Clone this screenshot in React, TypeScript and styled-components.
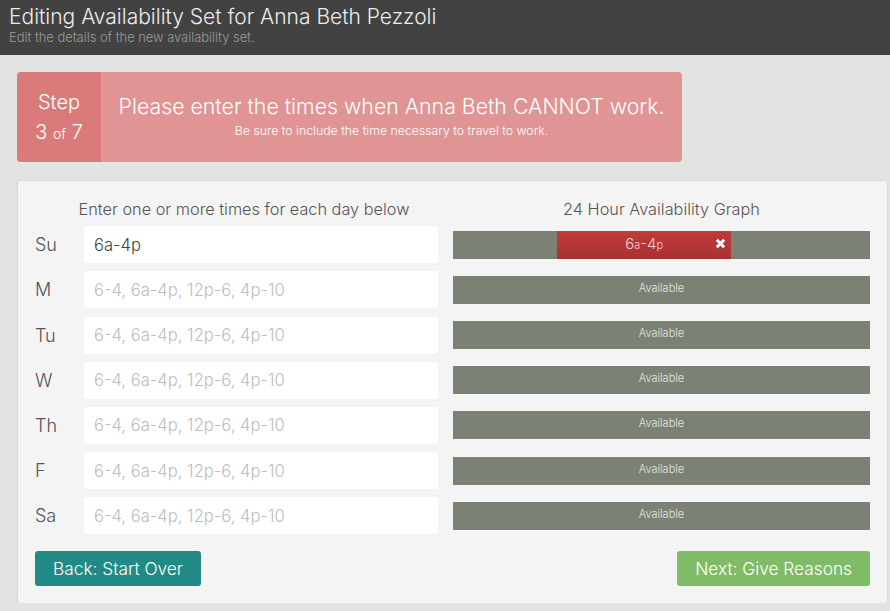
import React from "react";
import styled, { createGlobalStyle } from "styled-components";

const Global = createGlobalStyle`
  html, body { margin: 0; padding: 0; background: #e3e3e3; }
  body { font-family: Inter, "Liberation Sans", sans-serif; font-weight: 300; }
  * { box-sizing: border-box; }
`;

const Header = styled.header`
  background: #424242;
  height: 55px;
  padding: 4px 9px 0;
`;
const Title = styled.h1`
  margin: 0;
  font-size: 21px;
  font-weight: 300;
  color: #ececec;
  line-height: 26px;
`;
const Subtitle = styled.div`
  font-size: 12.9px;
  color: #9b9b9b;
  line-height: 16px;
`;

const Main = styled.main`
  padding: 17px 0 0 17px;
`;

const Banner = styled.div`
  display: flex;
  width: 665px;
  height: 90px;
  border-radius: 4px;
  overflow: hidden;
  background: #e09494;
  color: #fff;
`;
const StepBox = styled.div`
  width: 84px;
  background: #d97b7b;
  display: flex;
  flex-direction: column;
  align-items: center;
  justify-content: center;
  font-size: 20px;
  line-height: 30px;
  padding-top: 2px;
`;
const Of = styled.span`
  font-size: 14px;
`;
const BannerText = styled.div`
  flex: 1;
  display: flex;
  flex-direction: column;
  align-items: center;
  justify-content: center;
  padding-bottom: 4px;
`;
const BannerMain = styled.div`
  font-size: 21.3px;
  line-height: 28px;
`;
const BannerSub = styled.div`
  font-size: 12.3px;
  line-height: 16px;
  margin-top: 3px;
`;

const Panel = styled.section`
  margin-top: 19px;
  margin-left: 1px;
  width: 869px;
  background: #f4f4f4;
  border-radius: 3px;
  box-shadow: 0 0 2px rgba(0,0,0,0.15);
  padding: 17px;
`;
const Grid = styled.div`
  display: grid;
  grid-template-columns: 34px 354px 417px;
  column-gap: 15px;
  row-gap: 8.2px;
  align-items: center;
`;
const ColHead = styled.div<{ $wide?: boolean }>`
  grid-column: ${(p) => (p.$wide ? "1 / 3" : "auto")};
  margin-right: ${(p) => (p.$wide ? "-15px" : "0")};
  font-size: 16.3px;
  color: #555;
  text-align: center;
  line-height: 22px;
  margin-bottom: -2px;
`;
const Day = styled.div`
  font-size: 18px;
  color: #555;
`;
const Input = styled.input`
  height: 37px;
  border: none;
  border-radius: 3px;
  background: #fff;
  padding: 0 10px;
  font-family: inherit;
  font-weight: 300;
  font-size: 16.6px;
  color: #444;
  outline: none;
  &::placeholder { color: #bdbdbd; }
`;
const Bar = styled.div`
  position: relative;
  height: 28px;
  background: #7b8275;
  color: #e4e6e2;
  font-size: 11px;
  text-align: center;
  line-height: 24px;
`;
const Block = styled.div`
  position: absolute;
  top: 0;
  bottom: 0;
  background: linear-gradient(#c23a3a, #a83232);
  color: #f0d0d0;
  font-size: 15px;
  line-height: 26px;
  text-align: center;
`;
const Small = styled.span`
  font-size: 11px;
`;
const Close = styled.span`
  position: absolute;
  right: 5px;
  top: 7px;
  display: flex;
  width: 11px;
  height: 11px;
`;

const Footer = styled.div`
  display: flex;
  justify-content: space-between;
  margin-top: 17px;
`;
const Button = styled.button<{ $bg: string }>`
  height: 35px;
  border: none;
  border-radius: 3px;
  background: ${(p) => p.$bg};
  color: #fff;
  font-family: inherit;
  font-weight: 300;
  font-size: 17.3px;
  padding: 0 18px;
`;

const days = ["Su", "M", "Tu", "W", "Th", "F", "Sa"];

export default function App() {
  return (
    <>
      <Global />
      <Header>
        <Title>Editing Availability Set for Anna Beth Pezzoli</Title>
        <Subtitle>Edit the details of the new availability set.</Subtitle>
      </Header>
      <Main>
        <Banner>
          <StepBox>
            <div>Step</div>
            <div>
              3 <Of>of</Of> 7
            </div>
          </StepBox>
          <BannerText>
            <BannerMain>Please enter the times when Anna Beth CANNOT work.</BannerMain>
            <BannerSub>Be sure to include the time necessary to travel to work.</BannerSub>
          </BannerText>
        </Banner>
        <Panel>
          <Grid>
            <ColHead $wide>Enter one or more times for each day below</ColHead>
            <ColHead>24 Hour Availability Graph</ColHead>
            {days.map((d, i) => (
              <React.Fragment key={d}>
                <Day>{d}</Day>
                <Input
                  defaultValue={i === 0 ? "6a-4p" : ""}
                  placeholder="6-4, 6a-4p, 12p-6, 4p-10"
                />
                {i === 0 ? (
                  <Bar>
                    <Block style={{ left: `${(6 / 24) * 100}%`, width: `${(10 / 24) * 100}%` }}>
                      6<Small>a</Small>-4<Small>p</Small>
                      <Close>
                        <svg width="11" height="11" viewBox="0 0 11 11">
                          <path d="M1.8 1.8 L9.2 9.2 M9.2 1.8 L1.8 9.2" stroke="#fff" strokeWidth="3" />
                        </svg>
                      </Close>
                    </Block>
                  </Bar>
                ) : (
                  <Bar>Available</Bar>
                )}
              </React.Fragment>
            ))}
          </Grid>
          <Footer>
            <Button $bg="#218a86">Back: Start Over</Button>
            <Button $bg="#80bb68">Next: Give Reasons</Button>
          </Footer>
        </Panel>
      </Main>
    </>
  );
}
